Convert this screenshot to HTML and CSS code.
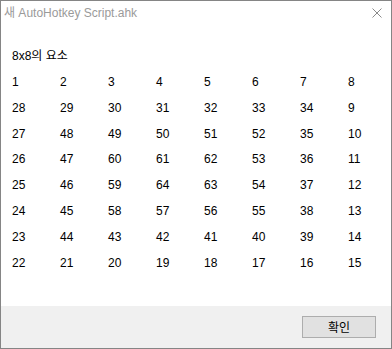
FILE: index.html
```html
<!DOCTYPE html>
<html lang="ko">
<head>
<meta charset="utf-8">
<title>새 AutoHotkey Script.ahk</title>
<link rel="stylesheet" href="styles.css">
</head>
<body>
<div class="window">
  <div class="titlebar">
    <div class="title">새 AutoHotkey Script.ahk</div>
    <svg class="close" width="10" height="10" viewBox="0 0 10 10"><path d="M0.5 0.5 L9.5 9.5 M9.5 0.5 L0.5 9.5" stroke="#8a8a8a" stroke-width="1" fill="none"/></svg>
  </div>
  <div class="content">
    <div class="heading">8x8의 요소</div>
    <div class="grid">
      <span>1</span><span>2</span><span>3</span><span>4</span><span>5</span><span>6</span><span>7</span><span>8</span>
      <span>28</span><span>29</span><span>30</span><span>31</span><span>32</span><span>33</span><span>34</span><span>9</span>
      <span>27</span><span>48</span><span>49</span><span>50</span><span>51</span><span>52</span><span>35</span><span>10</span>
      <span>26</span><span>47</span><span>60</span><span>61</span><span>62</span><span>53</span><span>36</span><span>11</span>
      <span>25</span><span>46</span><span>59</span><span>64</span><span>63</span><span>54</span><span>37</span><span>12</span>
      <span>24</span><span>45</span><span>58</span><span>57</span><span>56</span><span>55</span><span>38</span><span>13</span>
      <span>23</span><span>44</span><span>43</span><span>42</span><span>41</span><span>40</span><span>39</span><span>14</span>
      <span>22</span><span>21</span><span>20</span><span>19</span><span>18</span><span>17</span><span>16</span><span>15</span>
    </div>
  </div>
  <div class="footer">
    <button class="ok">확인</button>
  </div>
</div>
</body>
</html>
```
FILE: styles.css
```css
html, body {
  margin: 0;
  padding: 0;
  background: #ffffff;
}
body {
  font-family: "Liberation Sans", "Noto Sans CJK KR", sans-serif;
  font-size: 12px;
  color: #000;
}
.window {
  width: 392px;
  height: 349px;
  box-sizing: border-box;
  border: 1px solid #858585;
  display: flex;
  flex-direction: column;
  background: #fff;
}
.titlebar {
  height: 30px;
  display: flex;
  justify-content: space-between;
  align-items: flex-start;
  flex: none;
}
.title {
  margin-top: 4px;
  margin-left: 3px;
  line-height: 16px;
  color: #9a9a9a;
  white-space: nowrap;
}
.close {
  margin-top: 7px;
  margin-right: 9px;
  display: block;
}
.content {
  flex: 1;
  padding: 13px 0 0 11px;
  line-height: 25.85px;
}
.heading {
  white-space: nowrap;
}
.grid {
  display: grid;
  grid-template-columns: repeat(8, 48px);
}
.footer {
  flex: none;
  height: 42px;
  background: #f0f0f0;
  display: flex;
  justify-content: flex-end;
  align-items: flex-start;
  box-sizing: border-box;
  padding: 10px 15px 0 0;
}
.ok {
  width: 74px;
  height: 22px;
  margin: 0;
  padding: 0;
  box-sizing: border-box;
  border: 1px solid #adadad;
  background: #e1e1e1;
  font-family: "Noto Sans CJK KR", sans-serif;
  font-size: 12px;
  line-height: 18px;
  color: #000;
  border-radius: 0;
}
```
